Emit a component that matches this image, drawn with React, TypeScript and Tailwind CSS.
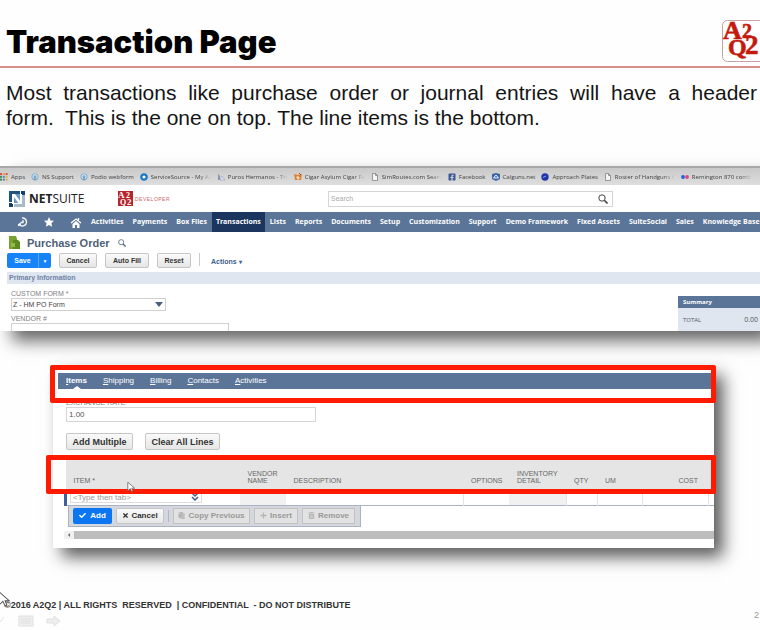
import type { ReactNode } from 'react'
import { FaCheck, FaCopy, FaFacebookSquare, FaPlus, FaTimes, FaTrashAlt } from 'react-icons/fa'

const bookmarks = [
  { label: 'Apps', icon: 'apps' },
  { label: 'NS Support', icon: 'globe' },
  { label: 'Podio webform', icon: 'globe' },
  { label: 'ServiceSource - My Ac', icon: 'ring', clip: true },
  { label: 'Puros Hermanos - Tru', icon: 'cigar', clip: true },
  { label: 'Cigar Asylum Cigar Fo', icon: 'asylum', clip: true },
  { label: 'SimRoutes.com Searc', icon: 'page', clip: true },
  { label: 'Facebook', icon: 'facebook' },
  { label: 'Calguns.net', icon: 'calguns' },
  { label: 'Approach Plates', icon: 'plates' },
  { label: 'Roster of Handguns C', icon: 'page', clip: true },
  { label: 'Remington 870 comb', icon: 'dots', clip: true },
]

const menu = [
  'Activities', 'Payments', 'Box Files', 'Transactions', 'Lists', 'Reports', 'Documents', 'Setup',
  'Customization', 'Support', 'Demo Framework', 'Fixed Assets', 'SuiteSocial', 'Sales', 'Knowledge Base',
]

const tabs = ['Items', 'Shipping', 'Billing', 'Contacts', 'Activities']

function BookmarkIcon({ name }: { name: string }) {
  return (
    <svg viewBox="0 0 8 8" className="h-2 w-2 shrink-0">
      {name === 'apps' && (
        <>
          {['#d9534a', '#e0a23c', '#d9534a', '#4c8a4c', '#4a86d0', '#e0b23c', '#4c8a4c', '#4a86d0', '#e0b23c'].map((c, i) => (
            <rect key={i} x={(i % 3) * 2.8} y={Math.floor(i / 3) * 2.8} width="2" height="2" fill={c} />
          ))}
        </>
      )}
      {name === 'globe' && (
        <>
          <circle cx="4" cy="3.8" r="3.6" fill="#8eb4d2" />
          <circle cx="4" cy="3.6" r="2" fill="none" stroke="#e8f1f8" strokeWidth=".8" />
          <path d="M4 3.6v3.6" stroke="#4e86b0" />
        </>
      )}
      {name === 'ring' && <circle cx="4" cy="4" r="2.7" fill="#fff" stroke="#1478c8" strokeWidth="2.2" />}
      {name === 'cigar' && (
        <>
          <path d="M1 1l2 2v4H1z" fill="#8c93b4" />
          <path d="M3 7l2-4 3 4z" fill="#dfe5f7" stroke="#8c93b4" strokeWidth=".5" />
        </>
      )}
      {name === 'asylum' && (
        <>
          <path d="M0 1l4 1 4-1-1 6H1z" fill="#d98236" />
          <path d="M2 4l2-1 2 2-2 2z" fill="#f7d9b5" />
          <path d="M5 0l2 2" stroke="#a04a20" />
        </>
      )}
      {name === 'page' && <path d="M1.5.5h3l2 2v5h-5zM4.500.5v2h2" fill="#f4f4f4" stroke="#777" strokeWidth=".7" />}
      {name === 'calguns' && (
        <>
          <path d="M0 1l4-1 4 1v5L4 8 0 6z" fill="#3f66ad" />
          <path d="M1.500 5L4 2l2.500 3z" fill="none" stroke="#fff" strokeWidth=".9" />
        </>
      )}
      {name === 'plates' && (
        <>
          <circle cx="4" cy="4" r="3.700" fill="#2336a8" />
          <path d="M2 4.500L5 3" stroke="#90a4f0" />
        </>
      )}
      {name === 'dots' && (
        <>
          <circle cx="2" cy="4" r="1.900" fill="#1c62d8" />
          <circle cx="6" cy="4" r="1.900" fill="#e8407c" />
        </>
      )}
    </svg>
  )
}

function SearchIcon({ className }: { className: string }) {
  return (
    <svg viewBox="0 0 10 10" className={className} fill="none" stroke="currentColor">
      <circle cx="4" cy="4" r="3.200" />
      <path d="M6.300 6.300L9.500 9.500" strokeWidth="1.600" />
    </svg>
  )
}

function SmallButton({ children, className = '' }: { children: ReactNode; className?: string }) {
  return (
    <button
      type="button"
      className={`flex items-center justify-center rounded-[2px] border border-[#c6c6c6] bg-linear-to-b from-[#fafafa] to-[#e6e6e6] font-bold text-[#333] ${className}`}
    >
      {children}
    </button>
  )
}

function Pointer({ className }: { className: string }) {
  return (
    <svg viewBox="0 0 10 14" className={className}>
      <path d="M1 1v11l3-3 2 4 1.500-.8L6 8.500h3.500z" fill="#fff" stroke="#555" strokeWidth=".9" />
    </svg>
  )
}

function BrowserPanel() {
  return (
    <section className="overflow-hidden bg-white font-['Liberation_Sans',sans-serif] text-[7px] leading-2 text-[#555]">
      {/* Bookmarks */}
      <div className="flex h-[19px] items-center gap-[6px] overflow-hidden border-t-2 border-[#a8a8a8] bg-linear-to-b from-[#c9c9c9] to-[#dedede] pt-px font-['Open_Sans',sans-serif] text-[6px] whitespace-nowrap">
        {bookmarks.map((b) => (
          <a key={b.label} href="#" className="flex shrink-0 items-center gap-[3px] text-[#404040]">
            {b.icon === 'facebook' ? <FaFacebookSquare className="h-2 w-2 text-[#3b5998]" /> : <BookmarkIcon name={b.icon} />}
            <span className={b.clip ? 'w-[60px] overflow-hidden mask-r-from-80%' : ''}>{b.label}</span>
          </a>
        ))}
      </div>

      {/* Logos and search */}
      <div className="flex h-[27px] items-center">
        <div className="ml-[9px] flex w-[109px] items-center gap-1">
          <svg viewBox="0 0 16 16" className="h-4 w-4">
            <path d="M0 0h11v3H3v8H0z" fill="#1f5480" />
            <path d="M3 3h8v9H3z" fill="#6f9abd" />
            <path d="M16 16H5v-3h8V4h3z" fill="#a9bac8" />
            <path d="M12 0h4v4h-4zM0 12h4v4H0z" fill="#16406a" />
            <path d="M3 3h3l5 7V3h2v10h-3L5 6v7H3z" fill="#fff" />
          </svg>
          <span className="font-['Open_Sans',sans-serif] text-[12px] leading-4 text-[#222]">
            <b>NET</b>SUITE
          </span>
        </div>
        <div className="flex w-[210px] items-center gap-[2px]">
          <svg viewBox="0 0 15 15" className="h-[15px] w-[15px] font-['Liberation_Serif',serif] font-bold">
            <rect width="15" height="15" fill="#b7242b" />
            <g fill="#fff">
              <text x="0" y="7" fontSize="9">A</text>
              <text x="8" y="7" fontSize="8">2</text>
              <text x="2" y="14" fontSize="8">Q</text>
              <text x="9" y="14" fontSize="9">2</text>
            </g>
          </svg>
          <span className="text-[5px] tracking-widest text-[#c9686c]">DEVELOPER</span>
        </div>
        <div className="flex h-4 w-[285px] items-center border border-[#d5d5d5] pr-1">
          <input aria-label="Search" placeholder="Search" className="h-full min-w-0 flex-1 px-[2px] outline-none placeholder:text-[#aaa]" />
          <SearchIcon className="h-[10px] w-[10px] text-[#444]" />
        </div>
      </div>

      {/* Main menu */}
      <nav className="flex h-5 items-stretch gap-px overflow-hidden bg-[#5b7599] font-['Open_Sans',sans-serif] font-bold whitespace-nowrap text-white">
        <div className="flex w-[86px] shrink-0 items-center gap-4 pl-[18px]">
          <svg viewBox="0 0 10 10" className="h-[10px] w-[10px]" fill="none" stroke="#fff" strokeWidth="1.300">
            <path d="M4 1a4 4 0 1 1-3 6M5 3v2.500H2.500M1 7l-.5 2M1 7h2" />
          </svg>
          <svg viewBox="0 0 10 10" className="h-[10px] w-[10px]" fill="#fff">
            <path d="M5 0l1.500 3.400 3.500.4-2.600 2.400.7 3.600L5 8 1.900 9.800l.7-3.600L0 3.800l3.500-.4z" />
          </svg>
          <svg viewBox="0 0 12 11" className="h-[11px] w-3">
            <path d="M1 6l5-4 5 4M8.500 1v2" fill="none" stroke="#fff" strokeWidth="1.300" />
            <path d="M6 4L2.500 7v4H5V8h2v3h2.500V7z" fill="#fff" />
          </svg>
        </div>
        {menu.map((item) => (
          <a
            key={item}
            href="#"
            className={`flex shrink-0 items-center px-1 ${item === 'Transactions' ? 'bg-[#1c355e]' : ''}`}
          >
            {item}
          </a>
        ))}
      </nav>

      {/* Record title */}
      <div className="flex h-[21px] items-center pl-[9px]">
        <svg viewBox="0 0 11 13" className="h-[13px] w-[11px]">
          <path d="M0 0h7l1 3v10H0z" fill="#78a22f" />
          <path d="M4 4h5l2 2v7H4z" fill="#5d8a1e" />
          <path d="M2 7h4v4H2z" fill="#93ba4d" />
        </svg>
        <h2 className="ml-[7px] text-[11px] leading-4 font-bold text-[#4d5f79]">Purchase Order</h2>
        <SearchIcon className="ml-2 h-2 w-2 text-[#4d6588]" />
      </div>

      {/* Actions */}
      <div className="flex h-[19px] items-start pl-[7px] text-[7px]">
        <div className="flex h-[15px] rounded-[2px] bg-[#1683f8] font-bold text-white">
          <button type="button" className="w-[31px]">Save</button>
          <button type="button" aria-label="Save options" className="w-[13px] border-l border-[#55a5fa] text-[5px]">▼</button>
        </div>
        <SmallButton className="ml-2 h-[15px] w-[38px]">Cancel</SmallButton>
        <SmallButton className="ml-2 h-[15px] w-11">Auto Fill</SmallButton>
        <SmallButton className="ml-2 h-[15px] w-[34px]">Reset</SmallButton>
        <div className="ml-2 h-[13px] w-px bg-[#ccc]" />
        <button type="button" className="ml-[11px] h-[17px] font-bold text-[#3f5f8f]">
          Actions <span className="text-[6px]">▾</span>
        </button>
      </div>

      <h3 className="ml-[7px] h-3 bg-[#dfe6f0] pl-[2px] leading-3 font-bold text-[#6d83a3]">Primary Information</h3>

      <div className="flex h-[47px] items-start justify-between">
        <div className="w-[218px] shrink-0 pt-[6px] pl-[11px]">
          <label htmlFor="form" className="block text-[#808080]">CUSTOM FORM *</label>
          <div className="relative w-[155px]">
            <select id="form" className="block h-[13px] w-full appearance-none border border-[#d0d0d0] px-px leading-[11px] text-[#444]">
              <option>Z - HM PO Form</option>
            </select>
            <svg viewBox="0 0 8 5" className="absolute top-1 right-[3px] h-[5px] w-2">
              <path d="M0 0h8L4 5z" fill="#4c5e80" />
            </svg>
          </div>
          <label htmlFor="vendor" className="mt-1 block text-[#808080]">VENDOR #</label>
          <input id="vendor" className="block h-3 w-[218px] border border-[#d0d0d0]" />
        </div>
        <div className="mt-3 w-[82px] shrink-0 bg-[#dfe6f0] font-['Open_Sans',sans-serif]">
          <div className="h-3 bg-[#5b7599] pl-[5px] text-[6px] leading-3 font-bold text-white">Summary</div>
          <div className="flex h-6 items-center justify-between pr-[2px] pl-[5px]">
            <span className="text-[6px]">TOTAL</span>
            <span>0.00</span>
          </div>
        </div>
      </div>
    </section>
  )
}

function ItemsPanel() {
  return (
    <section className="relative mt-[35px] mr-[46px] ml-[53px] bg-white pt-[7px] pb-[9px] font-['Liberation_Sans',sans-serif] text-[7px] leading-2 text-[#666] shadow-[9px_9px_16px_rgba(0,0,0,0.65)]">
      <nav className="ml-[5px] flex h-4 items-center gap-4 bg-[#5b7599] pl-2 text-[8px] text-white">
        {tabs.map((tab, i) => (
          <a key={tab} href="#" className={`relative flex h-full items-center ${i === 0 ? 'font-bold' : ''}`}>
            <span className="first-letter:underline">{tab}</span>
            {i === 0 && (
              <svg viewBox="0 0 8 3" className="absolute bottom-0 left-[7px] h-[3px] w-2">
                <path d="M0 3l4-3 4 3z" fill="#fff" />
              </svg>
            )}
          </a>
        ))}
      </nav>

      <div className="mt-[10px] pl-[13px]">
        <label htmlFor="rate" className="block text-[#808080]">EXCHANGE RATE</label>
        <input id="rate" defaultValue="1.00" className="block h-[15px] w-[250px] border border-[#d5d5d5] px-[2px] text-[8px] text-[#555]" />
        <div className="mt-[11px] flex gap-3 text-[9px]">
          <SmallButton className="h-[17px] w-[67px]">Add Multiple</SmallButton>
          <SmallButton className="h-[17px] w-[75px]">Clear All Lines</SmallButton>
        </div>
      </div>

      <div className="mt-[9px] ml-[11px]">
        <table className="w-full table-fixed border-collapse text-left">
          <colgroup>
            <col className="w-[174px]" />
            <col className="w-[46px]" />
            <col />
            <col className="w-[46px]" />
            <col className="w-[57px]" />
            <col className="w-[31px]" />
            <col className="w-[45px]" />
            <col className="w-[66px]" />
            <col className="w-[6px]" />
          </colgroup>
          <thead>
            <tr className="h-[31px] bg-[#e5e5e5] align-bottom leading-[7px]">
              {['ITEM *', 'VENDOR NAME', 'DESCRIPTION', 'OPTIONS', 'INVENTORY DETAIL', 'QTY', 'UM', 'COST', ''].map((h, i) => (
                <th key={h} className={`pb-[6px] font-normal ${h === 'COST' ? 'pr-[10px] text-right' : i < 8 ? 'pl-2' : ''}`}>{h}</th>
              ))}
            </tr>
          </thead>
          <tbody>
            <tr className="h-[15px] border-b border-[#a9b3c4]">
              <td className="border-l-3 border-[#40609c]">
                <div className="ml-[3px] flex h-3 w-[132px] items-center border border-[#ddd] pr-[2px]">
                  <input aria-label="Item" placeholder="<Type then tab>" className="h-full min-w-0 flex-1 px-[2px] text-[8px] placeholder:text-[#999]" />
                  <svg viewBox="0 0 8 8" className="h-2 w-2" fill="none" stroke="#455f8c" strokeWidth="1.500">
                    <path d="M1 0l3 3 3-3M1 4l3 3 3-3" />
                  </svg>
                </div>
              </td>
              <td className="bg-[#f1f1f1]" />
              <td className="border-r border-[#e3e3e3]" />
              <td />
              <td className="bg-[#f1f1f1]" />
              <td className="border-x border-[#e3e3e3]" />
              <td className="border-r border-[#e3e3e3]" />
              <td className="border-r border-[#e3e3e3]" />
              <td />
            </tr>
          </tbody>
        </table>

        <div className="ml-1 flex h-[21px] w-[293px] items-center gap-1 border border-t-0 border-[#aab3c2] bg-[#d4d8de] px-1 text-[8px] font-bold whitespace-nowrap">
          <button type="button" className="flex h-4 w-[39px] items-center justify-center gap-1 rounded-[2px] bg-[#0c75f0] text-white">
            <FaCheck className="h-[7px] w-[7px]" />Add
          </button>
          <SmallButton className="h-4 w-[48px] gap-[2px]">
            <FaTimes className="h-[7px] w-[7px]" />Cancel
          </SmallButton>
          <div className="h-3 w-px bg-[#b4b8be]" />
          <button type="button" disabled className="flex h-4 w-[77px] items-center justify-center gap-[3px] border border-[#c2c2c2] bg-[#e2e2e2] text-[#999]">
            <FaCopy className="h-[7px] w-[7px] -scale-x-100 text-[#b5b5b5]" />Copy Previous
          </button>
          <button type="button" disabled className="flex h-4 w-[44px] items-center justify-center gap-[3px] border border-[#c2c2c2] bg-[#e2e2e2] text-[#999]">
            <FaPlus className="h-[7px] w-[7px] text-[#b5b5b5]" />Insert
          </button>
          <button type="button" disabled className="flex h-4 w-[53px] items-center justify-center gap-[3px] border border-[#c2c2c2] bg-[#e2e2e2] text-[#999]">
            <FaTrashAlt className="h-[7px] w-[7px] text-[#b5b5b5]" />Remove
          </button>
        </div>

        {/* Scroll bar */}
        <div className="mt-1 flex h-2 items-center bg-[#f0f0f0]">
          <svg viewBox="0 0 10 8" className="h-2 w-[10px]">
            <path d="M6 2v4L4 4z" fill="#666" />
          </svg>
          <div className="h-2 flex-1 bg-[#bdbdbd]" />
        </div>
      </div>

      {/* Callouts */}
      <div className="absolute -top-px -right-[2px] -left-[3px] h-[38px] rounded-[2px] border-5 border-[#ff1a00]" />
      <div className="absolute top-[89px] -right-[2px] -left-[7px] h-[39px] rounded-[2px] border-5 border-[#ff1a00]" />
      <Pointer className="absolute top-[115px] left-[74px] h-3 w-2" />
    </section>
  )
}

export default function App() {
  return (
    <main className="relative min-h-screen overflow-hidden bg-[#fefefe] font-['Liberation_Sans',sans-serif]">
      <header className="flex h-[68px] items-center justify-between overflow-hidden border-b-2 border-[#d98f8c] pl-[6px]">
        <h1 className="pt-[18px] font-['Inter',sans-serif] text-[31px] leading-8 font-black text-black">Transaction Page</h1>
        <svg viewBox="0 0 38 42" className="mt-4 h-[42px] w-[38px] shrink-0 font-['Liberation_Serif',serif] font-bold">
          <rect x=".5" y=".5" width="50" height="41" rx="5" fill="#fff" stroke="#c9a3a3" />
          <g fill="#c41a0c" stroke="#c41a0c" strokeWidth=".6">
            <text x="1" y="19" fontSize="26">A</text>
            <text x="20" y="18" fontSize="20">2</text>
            <text x="6" y="35" fontSize="24">Q</text>
            <text x="23" y="34" fontSize="27">2</text>
          </g>
        </svg>
      </header>

      <p className="mt-3 pr-[3px] pl-[6px] text-[21px] leading-[25px] text-[#151515]">
        <span className="block text-justify [text-align-last:justify]">
          Most transactions like purchase order or journal entries will have a header
        </span>
        form.&nbsp; This is the one on top. The line items is the bottom.
      </p>

      <div className="mt-9 shadow-[12px_10px_16px_rgba(0,0,0,0.6)]">
        <BrowserPanel />
      </div>

      <ItemsPanel />

      <footer className="relative mt-[40px] text-[#333]">
        <p className="pt-[11px] pl-1 text-[9px] leading-3 font-bold whitespace-pre">©2016 A2Q2 | ALL RIGHTS  RESERVED  | CONFIDENTIAL  - DO NOT DISTRIBUTE</p>
        <span className="block pr-px text-right text-[9px] leading-2 text-[#999]">2</span>
        <Pointer className="absolute top-[3px] -left-1 h-4 w-4" />
        <svg viewBox="0 0 62 12" className="absolute top-[27px] left-0 h-3 w-[62px]" fill="#efefef" stroke="#e0e0e0">
          <path d="M0 7l4-5" fill="none" />
          <path d="M19 1h14v10H19zM21 4h10M21 6h10M21 8h10" />
          <path d="M47 4h7V1l6 5-6 5V8h-7z" />
        </svg>
      </footer>
    </main>
  )
}
